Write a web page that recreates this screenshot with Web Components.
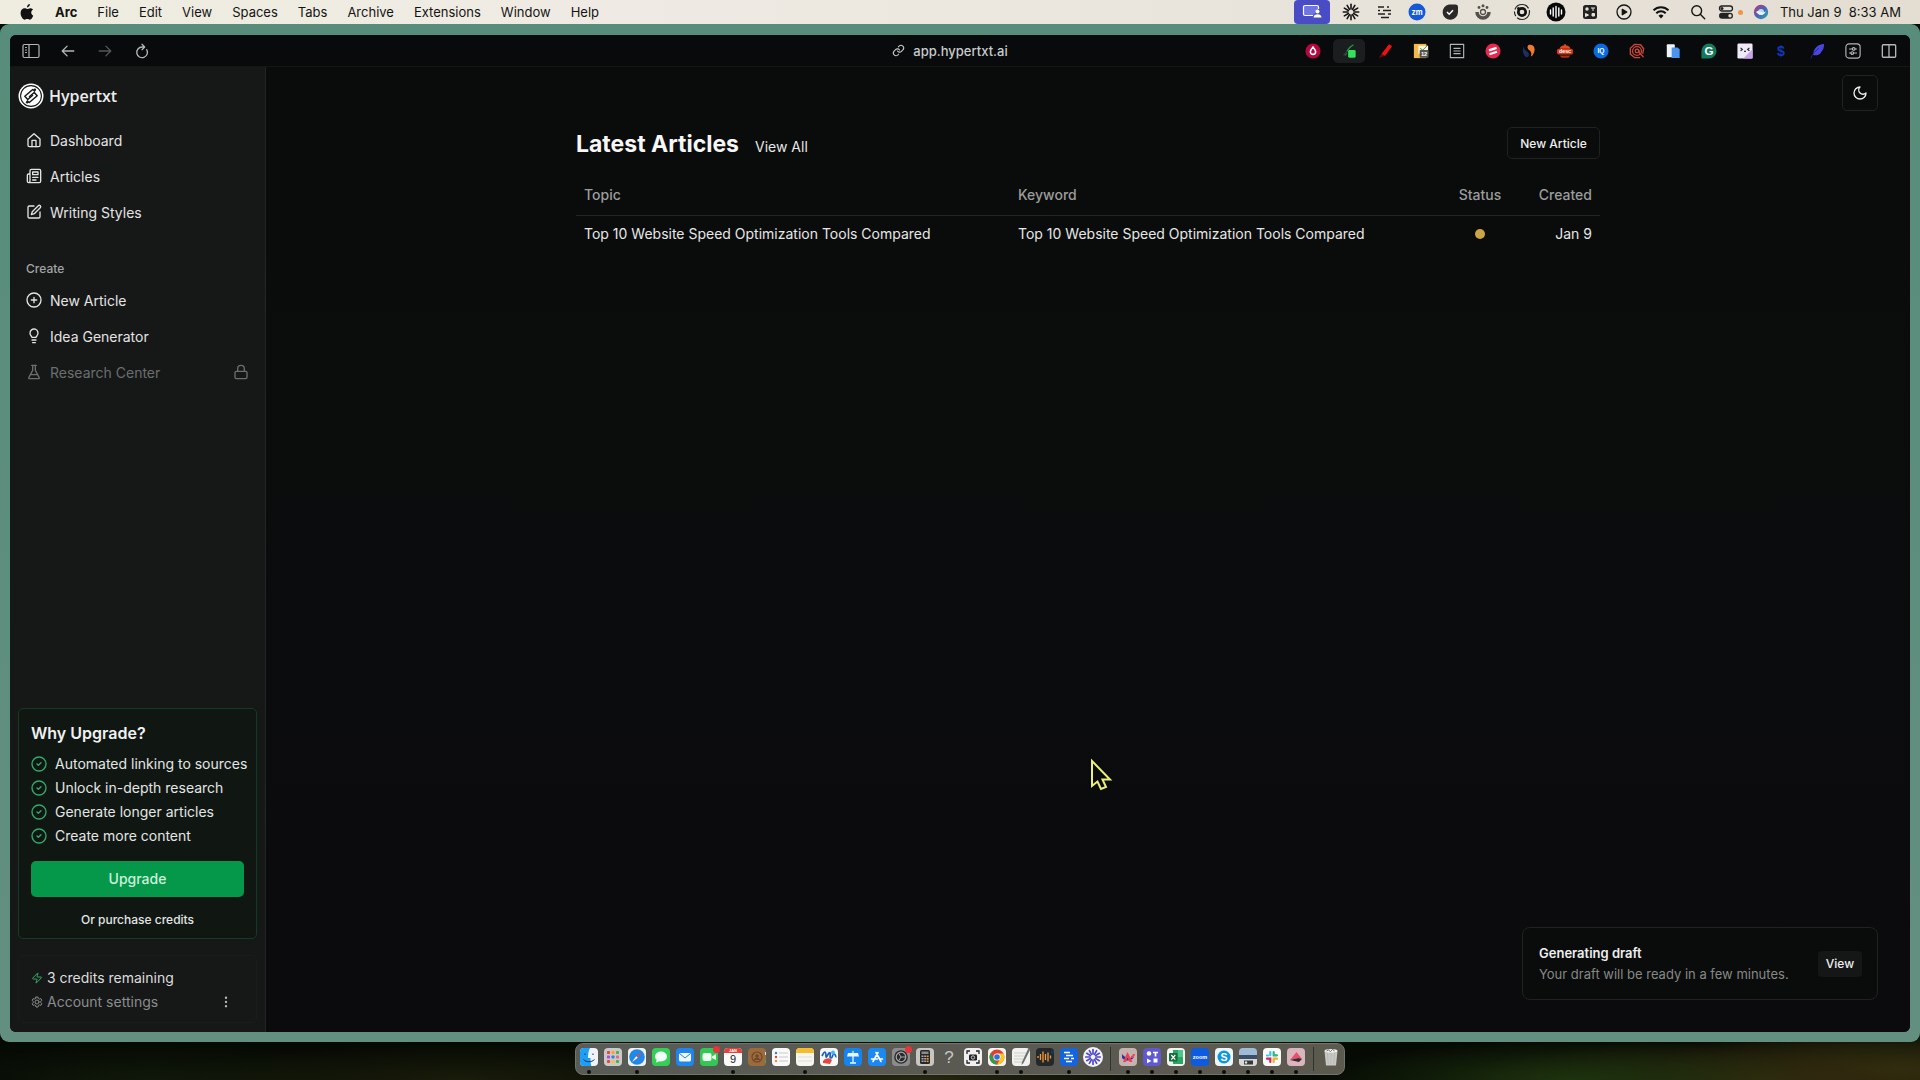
<!DOCTYPE html>
<html lang="en">
<head>
<meta charset="utf-8">
<title>Hypertxt</title>
<style>
    html, body {
        margin: 0;
        height: 100%;
    }
    body {
        font-family: Inter, "Liberation Sans", sans-serif;
        background: #060a04;
    }
</style>
</head>
<body>
<desktop-shell>
    <menu-bar slot="menu"></menu-bar>
    <browser-window>
        <side-bar slot="side"></side-bar>
        <articles-page></articles-page>
        <draft-toast slot="toast"></draft-toast>
    </browser-window>
    <mac-dock slot="dock"></mac-dock>
</desktop-shell>

<script>
const line = (body, box = 24, width = 2) =>
    `<svg viewBox="0 0 ${box} ${box}" fill="none" stroke="currentColor" stroke-width="${width}" stroke-linecap="round" stroke-linejoin="round">${body}</svg>`;
const solid = (body, box = 18) => `<svg viewBox="0 0 ${box} ${box}">${body}</svg>`;
const tile = (fill, body) => solid(`<rect width="18" height="18" rx="4" fill="${fill}"/>${body}`);

const rays = (count, inner, outer, c, color, width) => {
    let out = "";
    for (let i = 0; i < count; i++) {
        out += `<path d="M${c} ${c - inner}V${c - outer}" transform="rotate(${i * 360 / count} ${c} ${c})" stroke="${color}" stroke-width="${width}" stroke-linecap="round"/>`;
    }
    return out;
};

const icons = {
    // app
    logo: solid(`<circle cx="13" cy="13" r="12.5" fill="#fff"/><circle cx="13" cy="13" r="10.4" fill="none" stroke="#17191a" stroke-width="1.1"/><g fill="none" stroke="#17191a" stroke-width="1.5" stroke-linejoin="round"><path d="M17 8.500 14.700 6.500 6.800 13.200 9.800 16.500 15 12"/><path d="M9 17.500l2.300 2 7.900-6.700-3-3.300-5.200 4.500"/></g><circle cx="16.800" cy="6.700" r="1.300" fill="#17191a"/><circle cx="9.200" cy="19.300" r="1.300" fill="#17191a"/>`, 26),
    home: line(`<path d="M3 10.5 12 2.5l9 8V20a2 2 0 0 1-2 2H5a2 2 0 0 1-2-2z"/><path d="M9 22v-9.5h6V22"/>`),
    news: line(`<path d="M4 22h16a2 2 0 0 0 2-2V4a2 2 0 0 0-2-2H8a2 2 0 0 0-2 2v16a2 2 0 0 1-4 0v-9a2 2 0 0 1 2-2h2"/><path d="M18 14h-8M15 18h-5"/><path d="M10 6h8v4h-8z"/>`),
    edit: line(`<path d="M12 3H5a2 2 0 0 0-2 2v14a2 2 0 0 0 2 2h14a2 2 0 0 0 2-2v-7"/><path d="M18.4 2.6a2.1 2.1 0 0 1 3 3L12.4 14.6 8 16l1.4-4.4z"/>`),
    plus: line(`<circle cx="12" cy="12" r="10.5"/><path d="M8 12h8M12 8v8"/>`),
    bulb: line(`<path d="M15 14c.2-1 .7-1.700 1.500-2.500A6 6 0 1 0 6 8c0 1.300.4 2.500 1.500 3.500.7.700 1.300 1.500 1.500 2.500z"/><path d="M9 18h6M10 22h4"/>`),
    flask: line(`<path d="M8.500 2h7M10 2v7.500L4.200 20.500A1 1 0 0 0 5 22h14a1 1 0 0 0 .8-1.500L14 9.500V2M7 16h10"/>`),
    lock: line(`<rect x="3" y="11" width="18" height="11" rx="2"/><path d="M7 11V7a5 5 0 0 1 10 0v4"/>`),
    check: line(`<circle cx="12" cy="12" r="10.500"/><path d="m9 12 2 2 4-4"/>`),
    bolt: line(`<path d="M4 14a1 1 0 0 1-.8-1.600l9.900-10.200a.5.500 0 0 1 .9.500L12 8.700A1 1 0 0 0 13 10h7a1 1 0 0 1 .8 1.600l-9.900 10.200a.5.500 0 0 1-.9-.5l2-6A1 1 0 0 0 11 14z"/>`),
    gear: line(`<path d="M10 2h4l.7 3 2 1.200 3-.9 2 3.400-2.300 2.100v2.400l2.300 2.100-2 3.400-3-.9-2 1.200-.7 3h-4l-.7-3-2-1.200-3 .9-2-3.400 2.300-2.100v-2.400L2.300 8.700l2-3.400 3 .9 2-1.200z"/><circle cx="12" cy="12" r="4"/>`),
    dots: solid(`<g fill="currentColor"><circle cx="9" cy="3.500" r="1.500"/><circle cx="9" cy="9" r="1.500"/><circle cx="9" cy="14.500" r="1.500"/></g>`),
    moon: line(`<path d="M12 3a6 6 0 0 0 9 9 9 9 0 1 1-9-9z"/>`),
    cursor: solid(`<path d="M2 2v25l5.500-4.500 3.500 7.500 5-2-3.500-7.500H20z" fill="#0a0b0c" stroke="#e9f07a" stroke-width="2"/>`, 32),
    // browser toolbar
    panel: line(`<rect x="1" y="2.500" width="16" height="13" rx="1.500"/><path d="M7 2.500v13M3.500 5.500h1M3.500 8h1M3.500 10.500h1"/>`, 18, 1.2),
    back: line(`<path d="M15.500 9h-13M8 3.500 2.500 9 8 14.500"/>`, 18, 1.5),
    forward: line(`<path d="M2.500 9h13M10 3.500 15.500 9 10 14.500"/>`, 18, 1.5),
    reload: line(`<path d="M14.300 7.500A6 6 0 1 1 9 4.500h2.500M9 1.500l3 3-3 3"/>`, 18, 1.5),
    link: line(`<path d="M10 13a5 5 0 0 0 7.500.5l3-3a5 5 0 0 0-7-7L11.800 5.200"/><path d="M14 11a5 5 0 0 0-7.500-.5l-3 3a5 5 0 0 0 7 7l1.700-1.700"/>`),
    drop: solid(`<circle cx="9" cy="9" r="8.500" fill="#b5083f"/><path d="M9 4.500c2 2.500 3 3.700 3 5.300a3 3 0 0 1-6 0C6 8.200 7 7 9 4.500z" fill="none" stroke="#fff" stroke-width="1.700"/>`),
    pipette: solid(`<path d="M5 14C6 9 9 5 14 2" stroke="#1f9a3d" stroke-width="1.500" fill="none"/><path d="M3 14l4-5" stroke="#333" stroke-width="2"/><rect x="8" y="8" width="8.500" height="8.500" rx="1.500" fill="#35e05c"/>`),
    marker: solid(`<path d="M13.500 1.500 17 3.500 9 14.500l-4-2z" fill="#f01212"/><path d="M5 12.500l3.300 1.800L2 17z" fill="#7d0a0a"/>`),
    notes12: solid(`<rect x="1" y="1" width="14" height="16" fill="#f2b84b"/><path d="M6 3h11v9H6z" fill="#fff3d8"/><path d="M8 6l3 2 5-5" stroke="#2c8a54" fill="none"/><rect x="7.500" y="8" width="10" height="8.500" rx="1" fill="#555"/><text x="12.500" y="14.800" font-size="6.500" font-weight="700" fill="#fff" text-anchor="middle">12</text>`),
    list: line(`<rect x="1.500" y="1.500" width="15" height="15"/><path d="M5.500 6h7M5.500 9h7M5.500 12h7"/>`, 18, 1.3),
    slash: solid(`<circle cx="9" cy="9" r="8.500" fill="#e5294f"/><path d="M4.500 8.300 13 5.500M5 12.700 13.500 9.900" stroke="#fff" stroke-width="2.500"/>`),
    swirl: solid(`<path d="M9 2c6-1 8 5 5 10-1 2-2 3-3 3 2-4-1-7-3-8-1-2-1-4 1-5z" fill="#ee7a2e"/><path d="M3 4c0 5 6 5 6 9 0 2-1 3-3 3-4-2-5-9-3-12z" fill="#1d2f5f"/>`),
    desc: solid(`<path d="M9 1.500v3" stroke="#e04a1c" stroke-width="2"/><path d="M3 6.500a6 4 0 0 1 12 0z" fill="#e04a1c"/><rect x="0" y="6.500" width="18" height="6.500" rx="2" fill="#d13b18"/><text x="9" y="11.700" font-size="6" font-weight="800" fill="#fff" text-anchor="middle">desc</text><path d="M3 14h12l-2 2.500H5z" fill="#a92d10"/>`),
    iq: solid(`<circle cx="9" cy="9" r="8.500" fill="#0a6be0"/><text x="9" y="11.800" font-size="7.500" font-weight="800" fill="#fff" text-anchor="middle">IQ</text>`),
    hex: line(`<g stroke="#c9453a"><path d="M12 16.500 6.500 16.500 1.500 12.500V6L6.500 1.500 13 2l3.500 4.500-1 5"/><circle cx="9" cy="9" r="5"/><circle cx="9" cy="9" r="2"/><path d="M11.500 9v2l4.500 4.500"/></g>`, 18, 1.5),
    sheets: solid(`<rect x="2" y="1.500" width="9" height="14.500" rx="1" fill="#eef3f7"/><path d="M7.500 5H14l2.500 2v10h-9z" fill="#4a94ee"/>`),
    grammar: solid(`<path d="M9 .5a8.500 8.500 0 1 1 0 17H.5V9A8.500 8.500 0 0 1 9 .5z" fill="#137a5e"/><text x="9" y="13.600" font-size="13" font-weight="600" fill="#fff" text-anchor="middle">G</text>`),
    face: solid(`<rect x=".5" y=".5" width="17" height="17" rx="1.500" fill="#efeaf8"/><path d="M17.500 7v10.500H7z" fill="#c9a4ea"/><path d="m4 5.500 2 1.700-2 1.700M14 5.500l-2 1.700 2 1.700M8 9.500h2" stroke="#222" stroke-width="1.300" fill="none"/>`),
    dollar: solid(`<text x="9" y="15" font-size="16" font-weight="800" fill="#1537b8" text-anchor="middle">$</text>`),
    feather: solid(`<path d="M17 1c-8 .5-11 5-12 9.500l-.5 3c6 1.500 9-2 9.500-4 1.500-1 3-4 3-8.500z" fill="#4846dd"/><path d="M2 17.500C4 12 7 9 11 6" stroke="#25228f" fill="none"/>`),
    sliders: line(`<rect x="1" y="1" width="16" height="16" rx="3.500"/><path d="M5 6.700h3M11.500 6.700H13M5 11.300h1.500M10 11.300h3"/><circle cx="9.800" cy="6.700" r="1.500"/><circle cx="8.200" cy="11.300" r="1.500"/>`, 18, 1.3),
    split: line(`<rect x="1.500" y="2" width="15" height="14" rx="1"/><path d="M9 2v14"/>`, 18, 1.5),
    // menu bar
    apple: solid(`<path fill="#111" d="M12.300 0c.1 1.900-1.400 3.700-3.300 3.800C8.800 1.900 10.500.2 12.300 0zM16 13.200c-.7 1.900-2.300 4.500-3.800 4.500-1.100 0-1.600-.7-2.900-.7s-1.900.7-2.900.7C4.300 17.500 1.800 13.800 1.800 10.100c0-3.300 2.200-5.300 4.400-5.300 1.300 0 2.200.8 3.100.8.800 0 1.800-.9 3.500-.9 1.200 0 2.200.6 3 1.600-2.900 1.700-2.600 5.500.2 6.900z"/>`),
    share: solid(`<path d="M11 13.500H3A1.500 1.500 0 0 1 1.500 12V5A1.500 1.500 0 0 1 3 3.500h12A1.500 1.500 0 0 1 16.500 5v2" fill="#7075e4" stroke="#fff" stroke-width="1.200"/><circle cx="15.500" cy="9.500" r="2" fill="#fff"/><path d="M11.500 15.500c0-4.500 8-4.500 8 0z" fill="#fff"/>`, 20),
    burst: solid(rays(12, 3, 7.7, 9, "#161514", 1.6)),
    bars: solid(`<path d="M3 4h6M12 4h2M3 7.500h2M8 7.500h8M3 11h7M13 11h3M6 14.500h8" stroke="#222" stroke-width="1.700"/>`),
    zm: solid(`<circle cx="9" cy="9" r="8.500" fill="#1459d8"/><text x="9" y="11.500" font-size="7.500" font-weight="700" fill="#fff" text-anchor="middle">zm</text>`),
    tick: solid(`<path d="M8 1.500h6.500a2.500 2.500 0 0 1 2.500 2.500V9a7.700 7.700 0 1 1-9-7.500z" fill="#2a2927"/><path d="m6 9 2.200 2.200L12 7.300" stroke="#fff" stroke-width="1.500" fill="none"/>`),
    flower: solid(`<path d="M3 9a6 6 0 0 0 12 0" fill="none" stroke="#54514c" stroke-width="3.500"/><circle cx="9" cy="9" r="2.500" fill="none" stroke="#54514c" stroke-width="1.300"/><circle cx="5" cy="4.500" r="1.400" fill="#54514c"/><circle cx="13" cy="4.500" r="1.400" fill="#54514c"/><circle cx="9" cy="2.700" r="1.500" fill="#54514c"/>`),
    orbit: solid(`<circle cx="9" cy="9" r="7.500" fill="none" stroke="#262523" stroke-width="1.200" stroke-dasharray="17 2 5 2"/><circle cx="9" cy="9" r="3.700" fill="none" stroke="#111" stroke-width="2.700"/><circle cx="5.500" cy="5.500" r="1.500" fill="#111"/>`),
    wave: solid(`<circle cx="10" cy="10" r="9.500" fill="#080808"/><path d="M4.500 8v4M7.200 6v8M10 4.500v11M12.800 6v8M15.500 8v4" stroke="#fff" stroke-width="1.400" stroke-linecap="round"/>`, 20),
    blocks: solid(`<rect x="2" y="2" width="14" height="14" rx="2.500" fill="#222"/><circle cx="6" cy="6" r="1.700" fill="#e7e2d8"/><path d="M10 5h4M12 5v3M4.500 10.500l3 1.500-3 1.500zM11 10.500h2.500V13H11z" stroke="#e7e2d8" stroke-width="1" fill="#e7e2d8"/>`),
    play: line(`<circle cx="9" cy="9" r="7"/><path d="M7.300 6.300 11.800 9l-4.500 2.700z" fill="#111"/>`, 18, 1.3),
    wifi: solid(`<g fill="none" stroke="#111" stroke-width="2"><path d="M1.500 7.300a10.700 10.700 0 0 1 15 0M4.300 10.200a6.700 6.700 0 0 1 9.400 0"/></g><path d="M9 15.500 6.500 12.700a3.700 3.700 0 0 1 5 0z" fill="#111"/>`),
    search: line(`<circle cx="7.700" cy="7.700" r="4.900"/><path d="m11.300 11.300 4.400 4.400"/>`, 18, 1.4),
    control: solid(`<rect x="2.500" y="3" width="13" height="5" rx="2.500" fill="none" stroke="#222" stroke-width="1.300"/><circle cx="5" cy="5.500" r="1.500" fill="#222"/><rect x="2" y="9.700" width="14" height="6" rx="3" fill="#222"/><circle cx="13" cy="12.700" r="1.700" fill="#e2dcd2"/>`),
    siri: solid(`<defs><linearGradient id="a" x2="1" y2="1"><stop stop-color="#c33a72"/><stop offset=".5" stop-color="#4d5fb8"/><stop offset="1" stop-color="#25b3a8"/></linearGradient></defs><circle cx="9" cy="9" r="7.200" fill="url(#a)"/><circle cx="9" cy="9" r="3" fill="#b9d9f5"/><path d="M4 9c3-3 6 3 10-1-1 4-6 6-10 1z" fill="#e4f5ff"/>`),
    // dock
    finder: tile("#f1f4f7", `<path d="M4 0h6C8 4 8 7 8 10h2.500c0 3 .2 5 .8 8H4a4 4 0 0 1-4-4V4a4 4 0 0 1 4-4z" fill="#1f9ef5"/><path d="M5 5.500v1.500M13 5.500v1.500M3.500 11.500c3 3 8 3 11 0" stroke="#143253" fill="none"/>`),
    launchpad: tile("#c9c9c9", ["#e8453c", "#f6a623", "#4caf50", "#b04ad8", "#3a7de8", "#f06292", "#e8453c", "#f5c22f", "#4caf50"].map((c, i) => `<rect x="${3 + (i % 3) * 4.5}" y="${3 + Math.floor(i / 3) * 4.5}" width="3" height="3" rx=".7" fill="${c}"/>`).join("")),
    safari: tile("#f2f2f2", `<circle cx="9" cy="9" r="7.800" fill="#2088e5"/><path d="M14 4 9.800 9.800 8.200 8.200z" fill="#f04438"/><path d="m4 14 4.200-5.800 1.600 1.600z" fill="#fff"/>`),
    messages: tile("#35cf58", `<ellipse cx="9" cy="8.500" rx="6" ry="5" fill="#f2fff4"/><path d="M5 11l-1 3.500 4-1.500z" fill="#f2fff4"/>`),
    mail: tile("#1e86ee", `<rect x="3" y="5" width="12" height="8.500" rx="1.500" fill="#f2f7fc"/><path d="m3.500 5.500 5.500 4.500 5.500-4.500" stroke="#2b7fd4" fill="none"/>`),
    facetime: tile("#33c755", `<rect x="2.500" y="5" width="9" height="8" rx="2" fill="#effff1"/><path d="M12 8.500 16 6v6l-4-2z" fill="#effff1"/>`),
    calendar: tile("#fafafa", `<path d="M0 5V4a4 4 0 0 1 4-4h10a4 4 0 0 1 4 4v1z" fill="#e5403a"/><text x="9" y="15" font-size="11" fill="#222" text-anchor="middle">9</text><text x="9" y="4.300" font-size="4" font-weight="700" fill="#fff" text-anchor="middle">JAN</text>`),
    contacts: tile("#9b6a3d", `<circle cx="9" cy="9" r="5" fill="none" stroke="#6e4727" stroke-width="1.200"/><circle cx="9" cy="8" r="1.700" fill="#6e4727"/><path d="M6 12a3 2.200 0 0 1 6 0z" fill="#6e4727"/><path d="M17.500 4v3" stroke="#e0e0e0"/><path d="M17.500 12v3" stroke="#43a856"/>`),
    reminders: tile("#fafafa", `<circle cx="4" cy="5" r="1.200" fill="#2a7de1"/><circle cx="4" cy="9" r="1.200" fill="#e5403a"/><circle cx="4" cy="13" r="1.200" fill="#f0932b"/><path d="M7 5h9M7 9h9M7 13h9" stroke="#bbb" stroke-width=".8"/>`),
    notes: tile("#f8f6f0", `<path d="M0 5V4a4 4 0 0 1 4-4h10a4 4 0 0 1 4 4v1z" fill="#f5bd2e"/><path d="M2 9h14M2 13h14" stroke="#d6d3cb" stroke-width=".7"/>`),
    freeform: tile("#f7f7f7", `<path d="M3 15a5 4 0 0 1 9-3l-2 4z" fill="#e5483b"/><path d="M2 8c3-6 4-4 4 0s3-5 4-3-1 5 1 5 1-4 3-4 1 3 2.500 3" stroke="#175fc5" stroke-width="1.700" fill="none"/><circle cx="13" cy="4.500" r="2" fill="#48b7ec"/>`),
    keynote: tile("#1684f0", `<path d="M4 5h10l1 3.500H3z" fill="#e9f6ff"/><path d="M9 8v6.500M6 15h6" stroke="#e9f6ff" stroke-width="1.300"/><circle cx="9" cy="4" r="1.200" fill="#8ce07d"/>`),
    store: tile("#1a8af2", `<path d="M5 13.500 10 4.500M13 13.500 8 4.500M3.500 11h6M12 11h2.500" stroke="#fff" stroke-width="1.600" stroke-linecap="round"/>`),
    settings: tile("#8c8c8e", `<circle cx="9" cy="9" r="6.800" fill="#2a2b2d"/><circle cx="9" cy="9" r="4.800" fill="none" stroke="#aaa" stroke-width="1.200"/><path d="M9 9h4.500M9 9 6.500 5M9 9l-2.500 4" stroke="#aaa"/>`),
    calc: tile("#c9c6c2", `<rect x="4" y="2" width="10" height="14" rx="1.500" fill="#282828"/><rect x="5.500" y="3.500" width="7" height="2.500" fill="#8a8a8a"/>${[7.5, 10, 12.5].map(y => `<path d="M5.500 ${y}h2v1.600h-2zM8.200 ${y}h2v1.600h-2z" fill="#aaa"/><path d="M10.800 ${y}h1.800v1.600h-1.800z" fill="#f2992e"/>`).join("")}`),
    help: solid(`<text x="9" y="15" font-size="17" font-weight="300" fill="#c9c9c5" text-anchor="middle">?</text>`),
    capture: tile("#f0f0f0", `<path d="M3 6V3h3M12 3h3v3M15 12v3h-3M6 15H3v-3" stroke="#222" stroke-width="1.300" fill="none"/><rect x="5" y="6.500" width="8" height="6" rx="1.200" fill="#222"/><circle cx="9" cy="9.500" r="1.700" fill="none" stroke="#eee" stroke-width=".8"/>`),
    chrome: tile("#f6f6f6", `<circle cx="9" cy="9" r="7.500" fill="#e2402f"/><path d="M2.500 5.300 6.500 12l3 4.500A7.500 7.500 0 0 1 2.500 5.300z" fill="#2c9f4b"/><path d="M9 5.500h6.600A7.500 7.500 0 0 1 9.200 16.500L12.500 10z" fill="#f8c81f"/><circle cx="9" cy="9" r="3.600" fill="#fff"/><circle cx="9" cy="9" r="2.800" fill="#2a72de"/>`),
    textedit: tile("#f1f1ee", `<path d="M2 5h12M2 8h11M2 11h9M2 14h8" stroke="#bdbdb8" stroke-width=".7"/><path d="M16.500 0 10 14l-.5 3 2-2L18 2z" fill="#6a6f73"/>`),
    audio: tile("#25282b", `<path d="M2 8v2M4.500 6v6M7 3.500v11M9.500 6v6M12 4.500v9M14.500 7.500v3" stroke="#f29b38" stroke-width="1.300"/><circle cx="16.500" cy="4" r="1.700" fill="#103a5c"/>`),
    basecamp: tile("#1464dd", `<path d="M4 4.500h6M6 7.500h7M4 10.500h5M11 10.500h3M6 13.500h6" stroke="#fff" stroke-width="1.700"/>`),
    loom: solid(`<circle cx="10" cy="10" r="10" fill="#f5f5f8"/>${rays(12, 3, 7.3, 10, "#5148c9", 1.7)}`, 20),
    arc: tile("#c4b3ae", `<path d="M3 6c3 4 7 5 12 3-2 4-8 5-12 1z" fill="#2437a4"/><path d="M4 14 8.500 4 13.500 14H10.500L8.500 9.500 7 14z" fill="#ef4056"/><path d="M12 9c2 0 3-2 3-3" stroke="#ef4056" stroke-width="2" fill="none"/>`),
    shapes: tile("#5f58cf", `<circle cx="6" cy="5.500" r="2.300" fill="#fff"/><path d="M10 4.500h5M12.500 4.500V8.500" stroke="#fff" stroke-width="1.700"/><path d="M4 10.500 8.500 13 4 15.300zM10.500 10.500h4v4h-4z" fill="#fff"/>`),
    excel: tile("#f1f4f2", `<path d="M6 2h10v14H6z" fill="#2da565"/><path d="M11 2h5v7h-5z" fill="#4fc78a"/><rect x="2" y="5" width="8.500" height="8.500" rx="1" fill="#11703c"/><path d="m4.300 7 4 4.700M8.300 7l-4 4.700" stroke="#fff" stroke-width="1.200"/>`),
    zoom: tile("#0d5be0", `<text x="9" y="10.800" font-size="5.500" font-weight="700" fill="#fff" text-anchor="middle">zoom</text>`),
    skype: tile("#eef6fa", `<circle cx="9" cy="9" r="6.500" fill="#0d95dd"/><text x="9" y="12.800" font-size="10.500" font-weight="700" fill="#fff" text-anchor="middle">S</text>`),
    preview: tile("#9fb9d8", `<path d="M0 7h18v4H0z" fill="#3b4f69"/><path d="M0 11h18v3a4 4 0 0 1-4 4H4a4 4 0 0 1-4-4z" fill="#d9d9d6"/><path d="M5 12.500h9v4H5z" fill="#393939"/><circle cx="7" cy="14.500" r="1.300" fill="#ddd"/>`),
    slack: tile("#fafafa", `<g stroke-width="2.200" stroke-linecap="round"><path d="M7.300 4v3.300" stroke="#36c5f0"/><path d="M4 7.500h1" stroke="#36c5f0"/><path d="M14 7.300h-3.300V4" stroke="#2eb67d" fill="none"/><path d="M10.700 14v-3.300H14" stroke="#ecb22e" fill="none"/><path d="M4 10.700h3.300V14" stroke="#e01e5a" fill="none"/></g>`),
    peak: tile("#d9b6bd", `<path d="M3 12 9.500 4l5.500 7-3.500-1z" fill="#e8506e"/><path d="m3 12 8.500-2 3.500 1-3 3z" fill="#3a2a31"/>`),
    trash: solid(`<path d="M2.500 3h13l-1.500 14.500H4z" fill="#c8c9c4"/><path d="M5.500 5l.7 11M9 5v11M12.500 5l-.7 11" stroke="#b0b1ad" stroke-width=".7"/><ellipse cx="9" cy="2.700" rx="6.500" ry="1.700" fill="#f3f3f0"/><path d="M4.500 3l2-1 2 1.500 2-2 2 1.500" stroke="#555" stroke-width=".8" fill="none"/>`)
};

function define(name, html, setup) {
    const template = document.createElement("template");
    template.innerHTML = html;
    customElements.define(name, class extends HTMLElement {
        constructor() {
            super();
            this.attachShadow({mode: "open"});
            this.shadowRoot.appendChild(template.content.cloneNode(true));
        }

        connectedCallback() {
            if (setup) setup(this.shadowRoot, this);
        }
    });
}

class AppIcon extends HTMLElement {
    constructor() {
        super();
        this.attachShadow({mode: "open"});
    }

    connectedCallback() {
        this.shadowRoot.innerHTML = `
            <style>
                :host {
                    display: block;
                    flex: none;
                    width: var(--icon-size, 18px);
                    height: var(--icon-size, 18px);
                }
                svg { display: block; width: 100%; height: 100%; overflow: visible; }
            </style>
            ${icons[this.getAttribute("name")]}`;
    }
}

customElements.define("app-icon", AppIcon);

define("desktop-shell", /* html */ `
    <style>
        :host {
            display: grid;
            grid-template-rows: 24px minmax(0, 1fr) 38px;
            height: 100vh;
            overflow: hidden;
            background:
                radial-gradient(ellipse 260px 30px at 48% 100%, #262810, transparent),
                radial-gradient(ellipse 260px 40px at 82% 100%, #1c330e, transparent),
                radial-gradient(ellipse 300px 44px at 92% 100%, #33280e, transparent),
                radial-gradient(ellipse 240px 44px at 99% 99%, #30300f, transparent),
                radial-gradient(ellipse 300px 36px at 24% 100%, #191c0a, transparent),
                radial-gradient(ellipse 240px 36px at 8% 100%, #10180a, transparent),
                #060a04;
        }
    </style>
    <slot name="menu"></slot>
    <slot></slot>
    <slot name="dock"></slot>
`);

define("menu-bar", /* html */ `
    <style>
        :host {
            display: flex;
            justify-content: space-between;
            background: linear-gradient(90deg, #eeeddf, #efebe4 30%, #e3ddd2);
            color: #141412;
            font-size: 13px;
            line-height: 24px;
        }
        nav, .status { display: flex; align-items: center; }
        nav { padding-left: 19px; gap: 20px; }
        nav app-icon { --icon-size: 16px; }
        button {
            padding: 0;
            border: 0;
            background: none;
            color: inherit;
            font: inherit;
        }
        .app { font-weight: 700; }
        .status { padding-right: 19px; }
        .status button { width: 36px; display: flex; justify-content: center; }
        .status .tight { width: 32px; }
        .status .wide { width: 42px; }
        .status .narrow { width: 24px; }
        .status .share {
            --icon-size: 20px;
            height: 24px;
            align-items: center;
            border-radius: 4px;
            background: #4a4cc6;
        }
        .wave { --icon-size: 20px; }
        .mic { width: 5px; height: 5px; border-radius: 50%; background: #ef9546; }
        time { margin-left: 1px; white-space: pre; }
    </style>
    <nav>
        <button aria-label="Apple menu"><app-icon name="apple"></app-icon></button>
        <button class="app">Arc</button>
        <button>File</button>
        <button>Edit</button>
        <button>View</button>
        <button>Spaces</button>
        <button>Tabs</button>
        <button>Archive</button>
        <button>Extensions</button>
        <button>Window</button>
        <button>Help</button>
    </nav>
    <div class="status">
        <button class="share" aria-label="Screen sharing"><app-icon name="share"></app-icon></button>
        <button class="wide" aria-label="Recorder"><app-icon name="burst"></app-icon></button>
        <button class="narrow" aria-label="Text tools"><app-icon name="bars"></app-icon></button>
        <button class="wide" aria-label="Zoom"><app-icon name="zm"></app-icon></button>
        <button class="narrow" aria-label="Tasks"><app-icon name="tick"></app-icon></button>
        <button class="wide" aria-label="Setup"><app-icon name="flower"></app-icon></button>
        <button aria-label="Camera"><app-icon name="orbit"></app-icon></button>
        <button class="tight wave" aria-label="Audio"><app-icon name="wave"></app-icon></button>
        <button aria-label="Blocks"><app-icon name="blocks"></app-icon></button>
        <button class="tight" aria-label="Now playing"><app-icon name="play"></app-icon></button>
        <button class="wide" aria-label="Wi-Fi"><app-icon name="wifi"></app-icon></button>
        <button class="tight" aria-label="Search"><app-icon name="search"></app-icon></button>
        <button class="narrow" aria-label="Control centre"><app-icon name="control"></app-icon></button>
        <span class="mic"></span>
        <button aria-label="Siri"><app-icon name="siri"></app-icon></button>
        <time>Thu Jan 9  8:33 AM</time>
    </div>
`);

define("browser-window", /* html */ `
    <style>
        :host {
            display: grid;
            min-height: 0;
            padding: 11px 10px 10px;
            border-radius: 9px;
            background: linear-gradient(#578d7a, #638f80);
        }
        .frame {
            position: relative;
            display: grid;
            grid-template-rows: 32px minmax(0, 1fr);
            min-height: 0;
            border-radius: 6px;
            overflow: hidden;
            background: #0a0c0c;
        }
        .toolbar {
            display: grid;
            grid-template-columns: 1fr auto 1fr;
            align-items: center;
            background: #080a0b;
            border-bottom: 1px solid #141616;
            color: #b4b6b6;
        }
        .group { display: flex; }
        .ext { justify-content: flex-end; padding-right: 3px; }
        button {
            display: flex;
            justify-content: center;
            align-items: center;
            width: 36px;
            height: 24px;
            padding: 0;
            border: 0;
            background: none;
            color: inherit;
        }
        .nav { --icon-size: 16px; gap: 1px; padding-left: 3px; }
        .nav button:first-child { --icon-size: 18px; }
        .nav button:disabled { color: #555858; }
        .ext { --icon-size: 16px; }
        .ext .on { width: 32px; margin: 0 2px; border-radius: 5px; background: #1b1d1e; }
        .url {
            --icon-size: 13px;
            display: flex;
            align-items: center;
            gap: 8px;
            padding-right: 20px;
            color: #c9cbcb;
            font-size: 13px;
            font-weight: 500;
            text-decoration: none;
        }
        .body {
            display: grid;
            grid-template-columns: 256px minmax(0, 1fr);
            min-height: 0;
        }
        .toast { position: absolute; right: 32px; bottom: 32px; }
        .pointer { --icon-size: 32px; position: absolute; left: 1080px; top: 724px; }
    </style>
    <div class="frame">
        <div class="toolbar">
            <div class="group nav">
                <button aria-label="Toggle sidebar"><app-icon name="panel"></app-icon></button>
                <button aria-label="Back"><app-icon name="back"></app-icon></button>
                <button aria-label="Forward" disabled><app-icon name="forward"></app-icon></button>
                <button aria-label="Reload"><app-icon name="reload"></app-icon></button>
            </div>
            <a class="url" href="#"><app-icon name="link"></app-icon>app.hypertxt.ai</a>
            <div class="group ext"></div>
        </div>
        <div class="body">
            <slot name="side"></slot>
            <slot></slot>
        </div>
        <div class="toast"><slot name="toast"></slot></div>
        <app-icon class="pointer" name="cursor"></app-icon>
    </div>
`, (root) => {
    const names = ["drop", "pipette", "marker", "notes12", "list", "slash", "swirl", "desc", "iq",
        "hex", "sheets", "grammar", "face", "dollar", "feather", "sliders", "split"];
    root.querySelector(".ext").innerHTML = names.map(name =>
        `<button class="${name === "pipette" ? "on" : ""}" aria-label="${name}"><app-icon name="${name}"></app-icon></button>`).join("");
});

define("nav-item", /* html */ `
    <style>
        :host { display: block; }
        a {
            --icon-size: 16px;
            display: flex;
            align-items: center;
            gap: 8px;
            height: 36px;
            padding: 0 8px;
            color: #e3e4e4;
            font-size: 14px;
            text-decoration: none;
        }
        :host([locked]) a { color: #6c6e6e; }
        .lock { margin-left: auto; }
    </style>
    <a href="#"><slot></slot></a>
`, (root, host) => {
    const link = root.querySelector("a");
    link.insertAdjacentHTML("afterbegin", `<app-icon name="${host.getAttribute("icon")}"></app-icon>`);
    if (host.hasAttribute("locked")) {
        link.insertAdjacentHTML("beforeend", `<app-icon class="lock" name="lock"></app-icon>`);
    }
});

define("upgrade-card", /* html */ `
    <style>
        :host {
            display: block;
            padding: 12px 12px 6px;
            border: 1px solid #133b27;
            border-radius: 5px;
            background: #101713;
            color: #e3e6e4;
            font-size: 14px;
            line-height: 24px;
        }
        h3 { margin: 0 0 7px; font-size: 16px; font-weight: 600; color: #f0f2f1; }
        ul { margin: 0 0 13px; padding: 0; list-style: none; }
        li { --icon-size: 16px; display: flex; align-items: center; gap: 8px; white-space: nowrap; }
        li app-icon { color: #35a869; }
        button {
            display: block;
            width: 100%;
            padding: 0;
            border: 0;
            background: none;
            color: inherit;
            font: inherit;
            font-weight: 500;
        }
        .primary { height: 36px; border-radius: 5px; background: #06984a; color: #cdf0da; }
        .credits { height: 24px; margin-top: 11px; font-size: 12px; }
    </style>
    <h3>Why Upgrade?</h3>
    <ul>
        <li><app-icon name="check"></app-icon>Automated linking to sources</li>
        <li><app-icon name="check"></app-icon>Unlock in-depth research</li>
        <li><app-icon name="check"></app-icon>Generate longer articles</li>
        <li><app-icon name="check"></app-icon>Create more content</li>
    </ul>
    <button class="primary">Upgrade</button>
    <button class="credits">Or purchase credits</button>
`);

define("side-bar", /* html */ `
    <style>
        :host {
            display: flex;
            flex-direction: column;
            min-height: 0;
            padding: 0 8px 9px;
            border-right: 1px solid #232525;
            background: #161818;
        }
        .brand {
            --icon-size: 26px;
            display: flex;
            align-items: center;
            gap: 5px;
            padding: 16px 0 13px;
            color: #eceded;
            font-family: "Open Sans", sans-serif;
            font-size: 16px;
            font-weight: 600;
            line-height: 26px;
            text-decoration: none;
        }
        .create {
            margin: 29px 0 3px;
            padding-left: 8px;
            color: #a3a5a5;
            font-size: 12px;
            font-weight: 500;
            line-height: 20px;
        }
        upgrade-card { margin-top: auto; }
        .user {
            --icon-size: 12px;
            display: grid;
            grid-template-columns: 1fr auto;
            align-items: center;
            margin-top: 16px;
            padding: 10px 20px 8px 12px;
            border: 1px solid #1a1c1c;
            border-radius: 5px;
            font-size: 14px;
            line-height: 24px;
        }
        .user > * { display: flex; align-items: center; gap: 4px; }
        .credits { grid-column: 1 / 3; color: #dcdedd; }
        .credits app-icon { color: #35a869; }
        a.settings { color: #8b8d8d; text-decoration: none; }
        button {
            --icon-size: 14px;
            justify-content: center;
            width: 20px;
            padding: 0;
            border: 0;
            background: none;
            color: #b9bbbb;
        }
    </style>
    <a class="brand" href="#"><app-icon name="logo"></app-icon>Hypertxt</a>
    <nav>
        <nav-item icon="home">Dashboard</nav-item>
        <nav-item icon="news">Articles</nav-item>
        <nav-item icon="edit">Writing Styles</nav-item>
        <div class="create">Create</div>
        <nav-item icon="plus">New Article</nav-item>
        <nav-item icon="bulb">Idea Generator</nav-item>
        <nav-item icon="flask" locked>Research Center</nav-item>
    </nav>
    <upgrade-card></upgrade-card>
    <div class="user">
        <div class="credits"><app-icon name="bolt"></app-icon>3 credits remaining</div>
        <a class="settings" href="#"><app-icon name="gear"></app-icon>Account settings</a>
        <button aria-label="More"><app-icon name="dots"></app-icon></button>
    </div>
`);

define("articles-page", /* html */ `
    <style>
        :host {
            display: block;
            min-width: 0;
            background: linear-gradient(#0a0c0b, #0b0b0d);
            color: #e6e7e7;
            font-size: 14px;
        }
        .top {
            display: flex;
            justify-content: flex-end;
            height: 52px;
            padding: 8px 32px 0;
        }
        button {
            padding: 0;
            border: 1px solid #202222;
            border-radius: 5px;
            background: none;
            color: #eeefef;
            font: inherit;
        }
        .theme {
            --icon-size: 16px;
            display: flex;
            align-items: center;
            justify-content: center;
            width: 36px;
            height: 36px;
        }
        section { max-width: 1024px; margin: 0 auto; }
        header { display: flex; align-items: center; height: 32px; }
        .heading { display: flex; align-items: baseline; gap: 16px; flex: 1; padding-top: 2px; }
        h1 { margin: 0; font-size: 23px; font-weight: 700; line-height: 32px; color: #f7f7f7; }
        a { color: inherit; text-decoration: none; }
        .new { width: 93px; height: 32px; font-size: 12px; font-weight: 500; }
        table {
            width: 100%;
            margin-top: 16px;
            border-collapse: collapse;
            table-layout: fixed;
        }
        th, td { padding: 0 8px; text-align: left; line-height: 20px; }
        th { height: 40px; border-bottom: 1px solid #232525; color: #9b9d9d; font-weight: 500; }
        td { height: 36px; }
        .status { width: 56px; text-align: center; }
        .created { width: 68px; text-align: right; }
        .dot { display: inline-block; width: 10px; height: 10px; border-radius: 50%; background: #cda445; }
    </style>
    <div class="top"><button class="theme" aria-label="Toggle theme"><app-icon name="moon"></app-icon></button></div>
    <section>
        <header>
            <div class="heading"><h1>Latest Articles</h1><a href="#">View All</a></div>
            <button class="new">New Article</button>
        </header>
        <table>
            <thead>
                <tr><th>Topic</th><th>Keyword</th><th class="status">Status</th><th class="created">Created</th></tr>
            </thead>
            <tbody>
                <tr>
                    <td>Top 10 Website Speed Optimization Tools Compared</td>
                    <td>Top 10 Website Speed Optimization Tools Compared</td>
                    <td class="status"><span class="dot" role="img" aria-label="In progress"></span></td>
                    <td class="created">Jan 9</td>
                </tr>
            </tbody>
        </table>
    </section>
`);

define("draft-toast", /* html */ `
    <style>
        :host {
            display: flex;
            align-items: center;
            justify-content: space-between;
            box-sizing: border-box;
            width: 356px;
            height: 73px;
            padding: 0 15px 0 16px;
            border: 1px solid #202222;
            border-radius: 8px;
            background: #0a0c0b;
            color: #eeefef;
            font-size: 13px;
            line-height: 21px;
        }
        strong { display: block; font-weight: 600; }
        span { color: #868888; }
        button {
            width: 44px;
            height: 26px;
            padding: 0;
            border: 0;
            border-radius: 4px;
            background: #151717;
            color: inherit;
            font: inherit;
            font-size: 12px;
            font-weight: 500;
        }
    </style>
    <div role="status"><strong>Generating draft</strong><span>Your draft will be ready in a few minutes.</span></div>
    <button>View</button>
`);

define("mac-dock", /* html */ `
    <style>
        :host { display: flex; justify-content: center; align-items: flex-start; padding-top: 1px; }
        .shelf {
            display: flex;
            box-sizing: border-box;
            height: 32px;
            padding: 0 1px;
            border: 1px solid #74736c;
            border-radius: 8px;
            background: linear-gradient(90deg, #585b56, #5c594f);
        }
        button {
            position: relative;
            display: flex;
            flex-direction: column;
            align-items: center;
            justify-content: flex-start;
            width: 24px;
            padding: 4px 0 0;
            border: 0;
            background: none;
        }
        .round { --icon-size: 20px; padding-top: 3px; }
        .running::after {
            content: "";
            width: 4px;
            height: 4px;
            margin-top: 4px;
            border-radius: 50%;
            background: #0c0c0c;
        }
        .badge::before {
            content: "";
            position: absolute;
            z-index: 1;
            top: 2px;
            right: 1px;
            width: 7px;
            height: 7px;
            border-radius: 50%;
            background: #e9343a;
        }
        hr { width: 1px; height: 24px; margin: 3px 5px; border: 0; background: #33332e; }
    </style>
    <div class="shelf"></div>
`, (root) => {
    // "*" marks a running app, "!" one with a badge, "|" a divider
    const apps = "finder* launchpad safari* messages mail facetime! calendar* contacts reminders notes* freeform keynote store settings! calc* help capture chrome* textedit* audio basecamp* loom | arc* shapes* excel* zoom* skype* preview* slack* peak* | trash";
    root.querySelector(".shelf").innerHTML = apps.split(" ").map(app => {
        if (app === "|") return "<hr>";
        const name = app.replace(/[*!]/g, "");
        const classes = [app.includes("*") && "running", app.includes("!") && "badge", name === "loom" && "round"];
        return `<button class="${classes.filter(Boolean).join(" ")}" aria-label="${name}"><app-icon name="${name}"></app-icon></button>`;
    }).join("");
});
</script>
</body>
</html>
